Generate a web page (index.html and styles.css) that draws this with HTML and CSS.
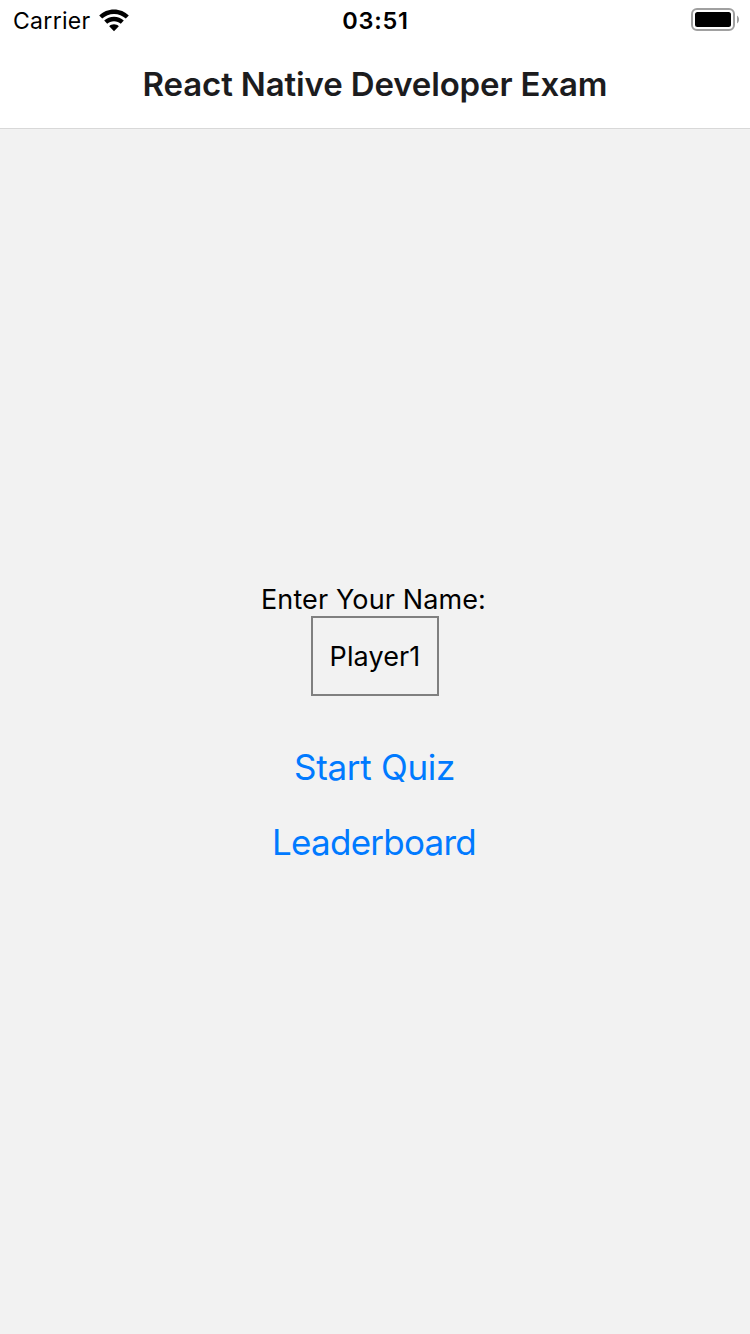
FILE: index.html
```html
<!DOCTYPE html>
<html lang="en">
<head>
<meta charset="utf-8">
<title>React Native Developer Exam</title>
<link rel="stylesheet" href="styles.css">
</head>
<body>
<header class="header">
  <div class="status">
    <div class="carrier"><span class="carrier-name">Carrier</span>
      <svg class="wifi" width="30" height="23" viewBox="0 0 30 22" preserveAspectRatio="none"><path d="M15 .5C9.200.5 4 2.700.2 6.200L3.200 9.200C6.400 6.300 10.400 4.700 15 4.700S23.600 6.300 26.800 9.200L29.800 6.200C26 2.700 20.800.5 15 .5ZM15 7.500C11.200 7.500 7.800 8.900 5.200 11.100L8.200 14.200C10 12.600 12.300 11.700 15 11.700S20 12.600 21.800 14.200L24.800 11.100C22.200 8.900 18.800 7.500 15 7.500ZM15 14.700C13.100 14.700 11.500 15.400 10.200 16.500L15 21.300L19.800 16.500C18.500 15.400 16.900 14.700 15 14.700Z"/></svg>
    </div>
    <time class="time">03:51</time>
    <svg class="battery" width="50" height="23" viewBox="0 0 50 23"><rect x="1" y="1" width="42" height="21" rx="5" fill="none" stroke="#a0a0a0" stroke-width="2"/><rect x="4" y="4" width="36" height="15" rx="2.500"/><path d="M46 7.500C48.700 9 48.700 14 46 15.500Z" fill="#a0a0a0"/></svg>
  </div>
  <h1 class="title">React Native Developer Exam</h1>
</header>
<main class="main">
  <label class="label" for="name">Enter Your Name:</label>
  <input class="name" id="name" value="Player1">
  <button class="action start">Start Quiz</button>
  <button class="action leaders">Leaderboard</button>
</main>
</body>
</html>
```

FILE: styles.css
```css
* { box-sizing: border-box; }
body { margin: 0; height: 1334px; background: #f2f2f2; font-family: Inter, sans-serif; color: #000; display: flex; flex-direction: column; }
.header { height: 129px; flex: none; background: #fff; border-bottom: 1px solid #d8d8d8; }
.status { height: 40px; display: grid; grid-template-columns: 1fr auto 1fr; align-items: center; padding: 0 9px 0 13px; }
.carrier { display: flex; align-items: center; gap: 8.5px; font-size: 23px; letter-spacing: 0.3px; }
.carrier-name { padding-top: 1px; }
.time { font-size: 23.5px; font-weight: 600; letter-spacing: 0.75px; margin-left: -3px; padding-top: 1px; }
.battery { justify-self: end; margin-bottom: 2px; }
.title { margin: 0; height: 88px; line-height: 88px; text-align: center; font-size: 33px; font-weight: 600; letter-spacing: -0.14px; color: #1c1c1e; }
.main { flex: 1; display: flex; flex-direction: column; align-items: center; padding-top: 455px; }
.label { font-size: 27px; line-height: 32px; letter-spacing: 0.12px; margin-right: 3px; }
.name { width: 128px; height: 80px; border: 2px solid #808080; background: transparent; padding: 0; text-align: center; font: 27px Inter, sans-serif; letter-spacing: 0.1px; color: #000; border-radius: 0; }
.action { border: 0; padding: 0; background: none; color: #007aff; font: 35px/43px Inter, sans-serif; }
.start { margin-top: 50px; letter-spacing: -0.3px; margin-right: 1px; }
.leaders { margin-top: 32px; letter-spacing: -0.75px; margin-right: 2px; }
```
